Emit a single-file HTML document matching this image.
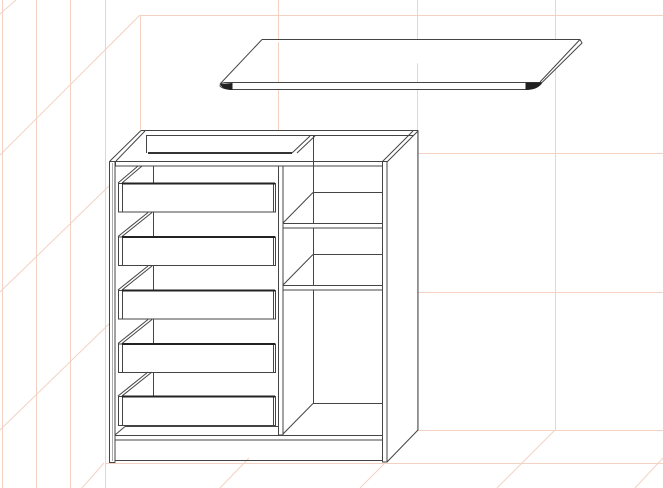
<!DOCTYPE html>
<html><head><meta charset="utf-8"><style>html,body{margin:0;padding:0;background:#fff;width:663px;height:488px;overflow:hidden}</style></head>
<body>
<svg width="663" height="488" viewBox="0 0 663 488" xmlns="http://www.w3.org/2000/svg">
<g stroke="#f3d2c4" stroke-width="1" fill="none">
<line x1="2.5" y1="0" x2="2.5" y2="488"/>
<line x1="36.5" y1="0" x2="36.5" y2="488"/>
<line x1="70.5" y1="0" x2="70.5" y2="488"/>
<line x1="105.5" y1="0" x2="105.5" y2="488"/>
<line x1="140.5" y1="15" x2="140.5" y2="130"/>
<line x1="278.5" y1="0" x2="278.5" y2="130"/>
<line x1="417.5" y1="0" x2="417.5" y2="430"/>
<line x1="555.5" y1="0" x2="555.5" y2="430"/>
<line x1="140" y1="15.5" x2="663" y2="15.5"/>
<line x1="418" y1="153.5" x2="663" y2="153.5"/>
<line x1="418" y1="292.5" x2="663" y2="292.5"/>
<line x1="418" y1="430.5" x2="663" y2="430.5"/>
<line x1="105" y1="463.5" x2="663" y2="463.5"/>
<line x1="16" y1="0" x2="0" y2="14"/>
<line x1="140" y1="15" x2="0" y2="155"/>
<line x1="110" y1="185" x2="0" y2="292"/>
<line x1="110" y1="323" x2="0" y2="430"/>
<line x1="104" y1="463" x2="82" y2="488"/>
<line x1="249" y1="458" x2="220" y2="488"/>
<line x1="385" y1="463" x2="360" y2="488"/>
<line x1="555" y1="430" x2="497" y2="488"/>
<line x1="663" y1="458" x2="635" y2="488"/>
</g>
<g stroke="#444" stroke-width="1" fill="none" stroke-linejoin="round">
<!-- floating top -->
<path d="M262 39.5 L580 39.5 L582 43 L542 82.5 L225 82.5 Q220 83 220 86 Q222 89 232 89.5 L526 89.5 Q538 89 542 82.5" fill="#fff"/>
<line x1="580" y1="39.5" x2="540" y2="82"/>
<path d="M262 39.5 L220 84"/>
<path d="M221 84 Q222 89 232 89.5 L232 83" fill="#222" stroke="#222"/>
<path d="M526 83 L526 89.5 Q538 89 541 83 Z" fill="#222" stroke="#222"/>
<!-- cabinet outer -->
<path d="M141 130.5 L418 130.5 L418 430 L387 462"/>
<line x1="146" y1="135.5" x2="413" y2="135.5"/>
<line x1="141" y1="130.5" x2="110" y2="161"/>
<line x1="145" y1="131" x2="116" y2="161"/>
<line x1="413" y1="131" x2="382" y2="162"/>
<line x1="418" y1="131" x2="387" y2="162"/>
<line x1="146.5" y1="136" x2="146.5" y2="153"/>
<line x1="148" y1="153" x2="292" y2="153" stroke-width="2" stroke="#333"/>
<!-- front top plate -->
<rect x="115.5" y="161.5" width="267" height="4.5" fill="#fff"/>
<!-- left panel -->
<rect x="109.5" y="161.5" width="5.5" height="301" fill="#fff"/>
<line x1="112.5" y1="163" x2="112.5" y2="461" stroke="#aaa"/>
<!-- right panel -->
<rect x="382.5" y="161.5" width="4.5" height="300.5" fill="#fff"/>
<!-- divider -->
<rect x="278.5" y="166" width="4.5" height="269" fill="#fff"/>
<line x1="292" y1="153" x2="310" y2="136"/>
<line x1="297" y1="153" x2="315" y2="136"/>
<line x1="313.5" y1="136" x2="313.5" y2="403"/>
<!-- shelves -->
<line x1="313" y1="192.5" x2="382" y2="192.5"/>
<line x1="313" y1="192.5" x2="283" y2="223"/>
<rect x="283" y="223.5" width="99.5" height="4.5" fill="#fff"/>
<line x1="313" y1="254.5" x2="382" y2="254.5"/>
<line x1="313" y1="254.5" x2="283" y2="285"/>
<rect x="283" y="285.5" width="99.5" height="4.5" fill="#fff"/>
<line x1="313" y1="403.5" x2="382" y2="403.5"/>
<line x1="313" y1="403.5" x2="283" y2="434"/>
<!-- bottom shelf & plinth -->
<line x1="125" y1="426.5" x2="278" y2="426.5"/>
<line x1="125" y1="426.5" x2="115" y2="435"/>
<rect x="115" y="435.5" width="267.5" height="4.5" fill="#fff"/>
<line x1="115" y1="460.5" x2="382" y2="460.5"/>
<!-- drawer back vertical -->
<line x1="153.5" y1="166" x2="153.5" y2="426"/>
</g>
<g stroke="#444" stroke-width="1" fill="none" id="drawers">
<g>
<line x1="118" y1="183" x2="138" y2="166"/><line x1="122" y1="183" x2="142" y2="166"/>
<rect x="118.5" y="183.5" width="157" height="28.5" fill="#fff"/>
<line x1="122.5" y1="184" x2="122.5" y2="212"/><line x1="273.5" y1="184" x2="273.5" y2="212"/>
<line x1="122" y1="183.5" x2="275" y2="183.5" stroke="#222" stroke-width="2"/>
</g>
<g transform="translate(0,53.5)">
<line x1="118" y1="183" x2="148" y2="159"/><line x1="122" y1="183" x2="152" y2="159"/>
<rect x="118.5" y="183.5" width="157" height="28.5" fill="#fff"/>
<line x1="122.5" y1="184" x2="122.5" y2="212"/><line x1="273.5" y1="184" x2="273.5" y2="212"/>
<line x1="122" y1="183.5" x2="275" y2="183.5" stroke="#222" stroke-width="2"/>
</g>
<g transform="translate(0,107)">
<line x1="118" y1="183" x2="148" y2="159"/><line x1="122" y1="183" x2="152" y2="159"/>
<rect x="118.5" y="183.5" width="157" height="28.5" fill="#fff"/>
<line x1="122.5" y1="184" x2="122.5" y2="212"/><line x1="273.5" y1="184" x2="273.5" y2="212"/>
<line x1="122" y1="183.5" x2="275" y2="183.5" stroke="#222" stroke-width="2"/>
</g>
<g transform="translate(0,160.5)">
<line x1="118" y1="183" x2="148" y2="159"/><line x1="122" y1="183" x2="152" y2="159"/>
<rect x="118.5" y="183.5" width="157" height="28.5" fill="#fff"/>
<line x1="122.5" y1="184" x2="122.5" y2="212"/><line x1="273.5" y1="184" x2="273.5" y2="212"/>
<line x1="122" y1="183.5" x2="275" y2="183.5" stroke="#222" stroke-width="2"/>
</g>
<g transform="translate(0,213)">
<line x1="118" y1="183" x2="148" y2="159"/><line x1="122" y1="183" x2="152" y2="159"/>
<rect x="118.5" y="183.5" width="157" height="29" fill="#fff"/>
<line x1="122.5" y1="184" x2="122.5" y2="212"/><line x1="273.5" y1="184" x2="273.5" y2="212"/>
<line x1="122" y1="183.5" x2="275" y2="183.5" stroke="#222" stroke-width="2"/>
</g>
</g>
</svg>
</body></html>
